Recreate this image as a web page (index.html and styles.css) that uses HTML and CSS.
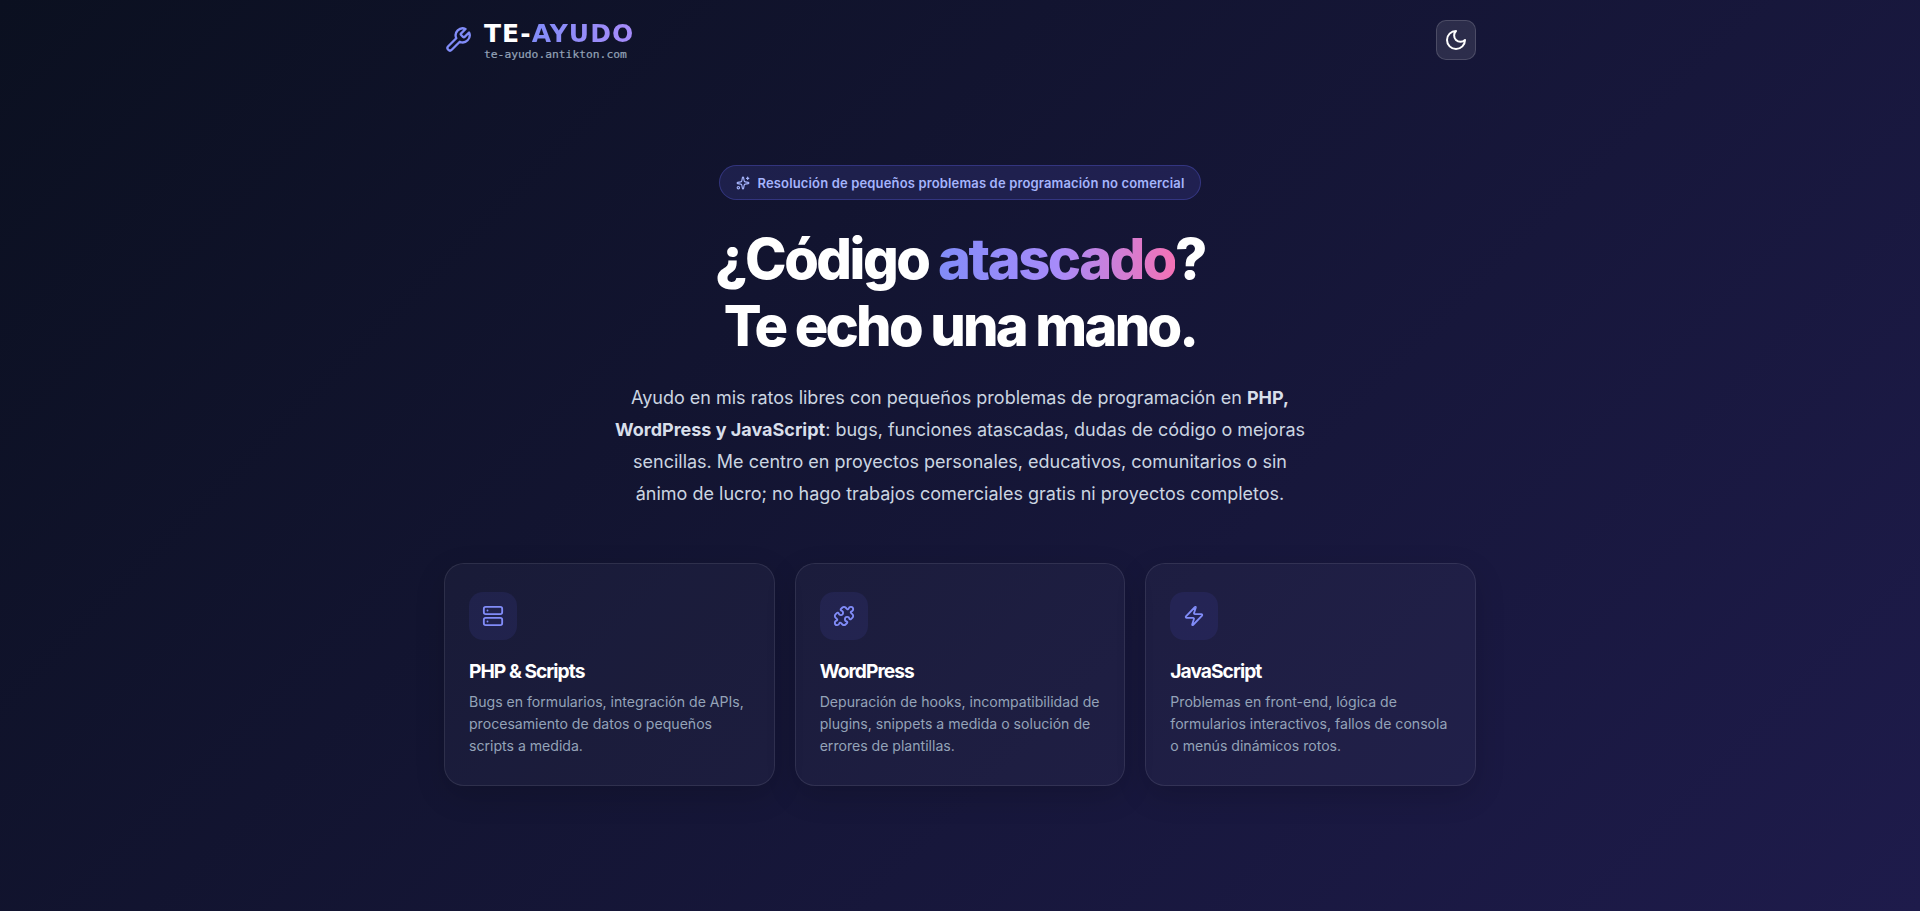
FILE: index.html

```html
<!DOCTYPE html>
<html lang="es">
<head>
    <meta charset="UTF-8">
    <meta name="viewport" content="width=device-width, initial-scale=1.0">
    <title>Te-Ayudo</title>
    <link rel="stylesheet" href="styles.css">
</head>
<body>
    <div class="container">
        <header class="site-header">
            <a class="brand" href="#">
                <svg class="brand-icon" viewBox="0 0 24 24"><path d="M14.7 6.3a1 1 0 0 0 0 1.4l1.6 1.6a1 1 0 0 0 1.4 0l3.77-3.77a6 6 0 0 1-7.94 7.94l-6.91 6.91a2.12 2.12 0 0 1-3-3l6.91-6.91a6 6 0 0 1 7.94-7.94l-3.76 3.76z"/></svg>
                <div class="brand-text">
                    <div class="brand-name">TE-<span class="brand-accent">AYUDO</span></div>
                    <div class="brand-url">te-ayudo.antikton.com</div>
                </div>
            </a>
            <button class="theme-toggle" type="button" aria-label="Cambiar tema">
                <svg viewBox="0 0 24 24"><path d="M12 3a6 6 0 0 0 9 9 9 9 0 1 1-9-9Z"/></svg>
            </button>
        </header>

        <section class="hero">
            <div class="badge">
                <svg viewBox="0 0 24 24">
                    <path d="M11.017 2.814a1 1 0 0 1 1.966 0l1.051 5.558a2 2 0 0 0 1.594 1.594l5.558 1.051a1 1 0 0 1 0 1.966l-5.558 1.051a2 2 0 0 0-1.594 1.594l-1.051 5.558a1 1 0 0 1-1.966 0l-1.051-5.558a2 2 0 0 0-1.594-1.594l-5.558-1.051a1 1 0 0 1 0-1.966l5.558-1.051a2 2 0 0 0 1.594-1.594z"/>
                    <path d="M20 2v4"/><path d="M22 4h-4"/><circle cx="4" cy="20" r="2"/>
                </svg>
                <span>Resolución de pequeños problemas de programación no comercial</span>
            </div>
            <h1><span class="first-line">¿Código <span class="gradient-text">atascado</span>?</span><br>Te echo una mano.</h1>
            <p class="lead">Ayudo en mis ratos libres con pequeños problemas de programación en <strong>PHP, WordPress y JavaScript</strong>: bugs, funciones atascadas, dudas de código o mejoras sencillas. Me centro en proyectos personales, educativos, comunitarios o sin ánimo de lucro; no hago trabajos comerciales gratis ni proyectos completos.</p>
        </section>

        <section class="cards">
            <div class="card">
                <div class="card-icon">
                    <svg viewBox="0 0 24 24">
                        <rect width="20" height="8" x="2" y="2" rx="2" ry="2"/>
                        <rect width="20" height="8" x="2" y="14" rx="2" ry="2"/>
                        <line x1="6" x2="6.01" y1="6" y2="6"/>
                        <line x1="6" x2="6.01" y1="18" y2="18"/>
                    </svg>
                </div>
                <h3>PHP &amp; Scripts</h3>
                <p>Bugs en formularios, integración de APIs, procesamiento de datos o pequeños scripts a medida.</p>
            </div>
            <div class="card">
                <div class="card-icon">
                    <svg viewBox="0 0 24 24"><path d="M15.39 4.39a1 1 0 0 0 1.68-.474 2.5 2.5 0 1 1 3.014 3.015 1 1 0 0 0-.474 1.68l1.683 1.682a2.414 2.414 0 0 1 0 3.414L19.61 15.39a1 1 0 0 1-1.68-.474 2.5 2.5 0 1 0-3.014 3.015 1 1 0 0 1 .474 1.68l-1.683 1.682a2.414 2.414 0 0 1-3.414 0L8.61 19.61a1 1 0 0 0-1.68.474 2.5 2.5 0 1 1-3.014-3.015 1 1 0 0 0 .474-1.68l-1.683-1.682a2.414 2.414 0 0 1 0-3.414L4.39 8.61a1 1 0 0 1 1.68.474 2.5 2.5 0 1 0 3.014-3.015 1 1 0 0 1-.474-1.68l1.683-1.682a2.414 2.414 0 0 1 3.414 0z"/></svg>
                </div>
                <h3>WordPress</h3>
                <p>Depuración de hooks, incompatibilidad de plugins, snippets a medida o solución de errores de plantillas.</p>
            </div>
            <div class="card">
                <div class="card-icon">
                    <svg viewBox="0 0 24 24"><path d="M4 14a1 1 0 0 1-.78-1.63l9.9-10.2a.5.5 0 0 1 .86.46l-1.92 6.02A1 1 0 0 0 13 10h7a1 1 0 0 1 .78 1.63l-9.9 10.2a.5.5 0 0 1-.86-.46l1.92-6.02A1 1 0 0 0 11 14z"/></svg>
                </div>
                <h3>JavaScript</h3>
                <p>Problemas en front-end, lógica de formularios interactivos, fallos de consola o menús dinámicos rotos.</p>
            </div>
        </section>
    </div>
</body>
</html>
```

FILE: styles.css

```css
* {
    box-sizing: border-box;
}

body {
    margin: 0;
    min-height: 100vh;
    font-family: 'Inter', sans-serif;
    background: linear-gradient(135deg, #0b1020 0%, #1e1b4b 100%);
    color: #fff;
}

svg {
    fill: none;
    stroke: currentColor;
    stroke-width: 2;
    stroke-linecap: round;
    stroke-linejoin: round;
}

.container {
    width: 1032px;
    margin: 0 auto;
}

.site-header {
    display: flex;
    justify-content: space-between;
    align-items: center;
    height: 40px;
    margin-top: 20px;
}

.brand {
    display: flex;
    align-items: center;
    gap: 12px;
    color: inherit;
    text-decoration: none;
}

.brand-icon {
    width: 28px;
    height: 28px;
    color: #818cf8;
}

.brand-text {
    padding-top: 2px;
}

.brand-name {
    font-family: 'DejaVu Sans', sans-serif;
    font-size: 25px;
    font-weight: 700;
    line-height: 26px;
    letter-spacing: 1.05px;
}

.brand-accent {
    background: linear-gradient(90deg, #818cf8, #a78bfa);
    -webkit-background-clip: text;
    background-clip: text;
    color: transparent;
}

.brand-url {
    margin-top: 1px;
    font-family: 'DejaVu Sans Mono', monospace;
    font-size: 11.3px;
    line-height: 14px;
    color: #94a3b8;
    -webkit-text-stroke: 0.2px #94a3b8;
}

.theme-toggle {
    display: flex;
    align-items: center;
    justify-content: center;
    width: 40px;
    height: 40px;
    padding: 0;
    background: rgba(255, 255, 255, 0.1);
    border: 1px solid rgba(255, 255, 255, 0.15);
    border-radius: 10px;
    color: #fff;
}

.theme-toggle svg {
    width: 24px;
    height: 24px;
}

.hero {
    display: flex;
    flex-direction: column;
    align-items: center;
    padding-top: 105px;
    text-align: center;
}

.badge {
    display: flex;
    align-items: center;
    gap: 8px;
    height: 35px;
    padding: 0 16px;
    background: rgba(99, 102, 241, 0.15);
    border: 1px solid rgba(99, 102, 241, 0.3);
    border-radius: 18px;
    color: #a5b4fc;
    font-size: 13px;
    font-weight: 600;
    letter-spacing: 0.15px;
}

.badge svg {
    width: 14px;
    height: 14px;
}

h1 {
    margin: 26px 0 0;
    font-size: 56px;
    font-weight: 800;
    line-height: 67px;
    letter-spacing: -2.8px;
}

.first-line {
    letter-spacing: -2.5px;
}

.gradient-text {
    background: linear-gradient(90deg, #818cf8, #a78bfa 50%, #f472b6);
    -webkit-background-clip: text;
    background-clip: text;
    color: transparent;
}

.lead {
    width: 700px;
    margin: 22px 0 0;
    font-size: 18px;
    line-height: 32px;
    color: #cbd5e1;
}

.lead strong {
    color: #d8dfea;
    font-weight: 700;
}

.cards {
    display: grid;
    grid-template-columns: repeat(3, 1fr);
    gap: 20px;
    margin-top: 53px;
}

.card {
    padding: 28px 24px;
    background: rgba(200, 210, 255, 0.04);
    border: 1px solid rgba(255, 255, 255, 0.09);
    border-radius: 20px;
    box-shadow: 0 10px 30px rgba(0, 0, 0, 0.15);
}

.card-icon {
    display: flex;
    align-items: center;
    justify-content: center;
    width: 48px;
    height: 48px;
    background: rgba(99, 102, 241, 0.1);
    border-radius: 14px;
    color: #818cf8;
}

.card-icon svg {
    width: 22px;
    height: 22px;
}

.card h3 {
    margin: 17px 0 0;
    font-size: 19.2px;
    font-weight: 700;
    line-height: 28px;
    letter-spacing: -0.96px;
}

.card p {
    margin: 6px 0 0;
    font-size: 14.08px;
    line-height: 22px;
    color: #94a3b8;
}
```
